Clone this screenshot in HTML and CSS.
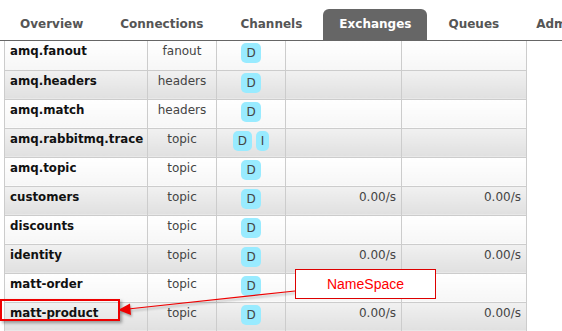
FILE: index.html
```html
<!DOCTYPE html>
<html lang="en">
<head>
    <meta charset="UTF-8">
    <title>Exchanges</title>
    <link rel="stylesheet" href="styles.css">
</head>
<body>
    <div id="menu">
        <ul>
            <li><a href="#">Overview</a></li>
            <li><a href="#">Connections</a></li>
            <li><a href="#">Channels</a></li>
            <li><a href="#" class="selected">Exchanges</a></li>
            <li><a href="#">Queues</a></li>
            <li><a href="#">Admin</a></li>
        </ul>
    </div>

    <table class="list">
        <tbody>
            <tr class="alt2">
                <td class="name">amq.fanout</td>
                <td class="type">fanout</td>
                <td class="features"><abbr>D</abbr></td>
                <td class="rate"></td>
                <td class="rate"></td>
            </tr>
            <tr class="alt1">
                <td class="name">amq.headers</td>
                <td class="type">headers</td>
                <td class="features"><abbr>D</abbr></td>
                <td class="rate"></td>
                <td class="rate"></td>
            </tr>
            <tr class="alt2">
                <td class="name">amq.match</td>
                <td class="type">headers</td>
                <td class="features"><abbr>D</abbr></td>
                <td class="rate"></td>
                <td class="rate"></td>
            </tr>
            <tr class="alt1">
                <td class="name">amq.rabbitmq.trace</td>
                <td class="type">topic</td>
                <td class="features"><abbr>D</abbr> <abbr>I</abbr></td>
                <td class="rate"></td>
                <td class="rate"></td>
            </tr>
            <tr class="alt2">
                <td class="name">amq.topic</td>
                <td class="type">topic</td>
                <td class="features"><abbr>D</abbr></td>
                <td class="rate"></td>
                <td class="rate"></td>
            </tr>
            <tr class="alt1">
                <td class="name">customers</td>
                <td class="type">topic</td>
                <td class="features"><abbr>D</abbr></td>
                <td class="rate">0.00/s</td>
                <td class="rate">0.00/s</td>
            </tr>
            <tr class="alt2">
                <td class="name">discounts</td>
                <td class="type">topic</td>
                <td class="features"><abbr>D</abbr></td>
                <td class="rate"></td>
                <td class="rate"></td>
            </tr>
            <tr class="alt1">
                <td class="name">identity</td>
                <td class="type">topic</td>
                <td class="features"><abbr>D</abbr></td>
                <td class="rate">0.00/s</td>
                <td class="rate">0.00/s</td>
            </tr>
            <tr class="alt2">
                <td class="name">matt-order</td>
                <td class="type">topic</td>
                <td class="features"><abbr>D</abbr></td>
                <td class="rate"></td>
                <td class="rate"></td>
            </tr>
            <tr class="alt1">
                <td class="name">matt-product</td>
                <td class="type">topic</td>
                <td class="features"><abbr>D</abbr></td>
                <td class="rate">0.00/s</td>
                <td class="rate">0.00/s</td>
            </tr>
        </tbody>
    </table>

    <!-- annotation drawn over the screenshot -->
    <div class="highlight"></div>
    <svg class="arrow" width="562" height="331" viewBox="0 0 562 331">
        <line x1="295" y1="291" x2="128" y2="309" />
        <polygon points="118,310 130,303.5 131,315" />
    </svg>
    <div class="callout">NameSpace</div>
</body>
</html>
```

FILE: styles.css
```css
body {
    margin: 0;
    padding: 0;
    background: #fff;
    font-family: "DejaVu Sans", Verdana, sans-serif;
    font-size: 12px;
    color: #444;
    overflow: hidden;
    position: relative;
    width: 562px;
    height: 331px;
}

#menu {
    overflow: hidden;
}

#menu ul {
    list-style: none;
    margin: 0;
    padding: 9px 0 0 4px;
    height: 31px;
    display: flex;
    gap: 5px;
    border-bottom: 1px solid #666;
    white-space: nowrap;
}

#menu li {
    display: flex;
    flex-shrink: 0;
}

#menu a {
    display: block;
    padding: 0 16px;
    line-height: 31px;
    font-weight: bold;
    font-size: 12px;
    color: #555;
    text-decoration: none;
    border-radius: 6px 6px 0 0;
}

#menu a.selected {
    background: #666;
    color: #fff;
}

table.list {
    border-collapse: collapse;
    margin-left: 4px;
    table-layout: fixed;
    width: 523px;
}

table.list td {
    height: 29px;
    box-sizing: border-box;
    padding: 3px 5px 0;
    line-height: 15px;
    vertical-align: top;
    border: 1px solid #ccc;
    border-top: none;
    white-space: nowrap;
}

table.list tr.alt1 td {
    background: linear-gradient(#f1f1f1, #e0e0e0);
}

table.list tr.alt2 td {
    background: linear-gradient(#ffffff, #f6f6f6);
}

table.list td.name {
    width: 143px;
    padding-right: 2px;
    font-weight: bold;
    font-size: 11.8px;
    color: #111;
}

td.type {
    width: 69px;
    text-align: center;
}

td.features {
    width: 69px;
    text-align: center;
}

table.list td.features {
    padding-top: 2px;
}

td.rate {
    text-align: right;
}

td.rate:nth-child(4) {
    width: 116px;
}

abbr {
    display: inline-block;
    background: #99ebff;
    border-radius: 5px;
    padding: 0 5px;
    height: 20px;
    line-height: 20px;
    text-decoration: none;
    color: #444;
}

.highlight {
    position: absolute;
    left: 0;
    top: 299px;
    width: 116px;
    height: 18px;
    border: 2px solid #e00;
    box-shadow: 2px 2px 3px rgba(0, 0, 0, 0.35);
}

.arrow {
    position: absolute;
    left: 0;
    top: 0;
    filter: drop-shadow(1px 2px 1px rgba(0, 0, 0, 0.3));
}

.arrow line {
    stroke: #e00;
    stroke-width: 1.2;
}

.arrow polygon {
    fill: #e00;
}

.callout {
    position: absolute;
    left: 295px;
    top: 269px;
    width: 139px;
    height: 28px;
    border: 1px solid #d00;
    background: #fff;
    color: #f00;
    font-family: "Liberation Sans", Arial, sans-serif;
    font-size: 14px;
    line-height: 28px;
    text-align: center;
}
```
